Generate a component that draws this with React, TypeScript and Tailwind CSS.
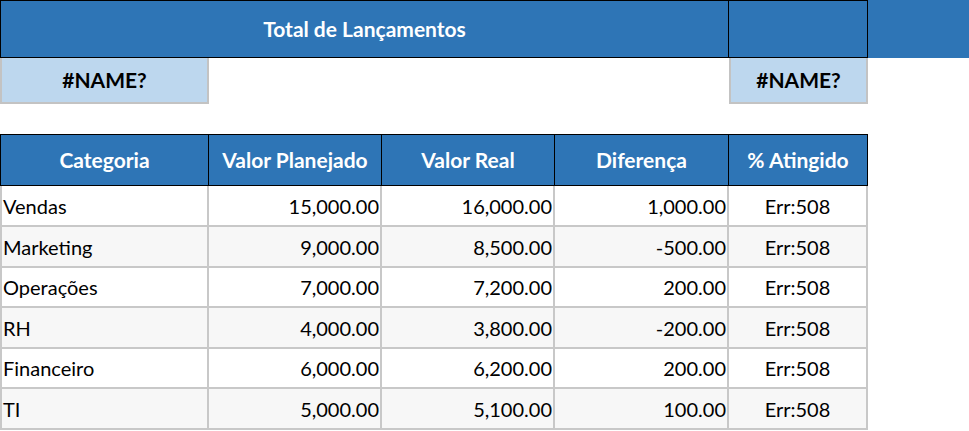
import React from 'react';

const BLUE = 'bg-[#2e75b6]';

interface Row {
  cat: string;
  plan: string;
  real: string;
  diff: string;
  h: string;
}

const rows: Row[] = [
  { cat: 'Vendas', plan: '15,000.00', real: '16,000.00', diff: '1,000.00', h: 'h-[41px]' },
  { cat: 'Marketing', plan: '9,000.00', real: '8,500.00', diff: '-500.00', h: 'h-[41px]' },
  { cat: 'Operações', plan: '7,000.00', real: '7,200.00', diff: '200.00', h: 'h-[40px]' },
  { cat: 'RH', plan: '4,000.00', real: '3,800.00', diff: '-200.00', h: 'h-[41px]' },
  { cat: 'Financeiro', plan: '6,000.00', real: '6,200.00', diff: '200.00', h: 'h-[40px]' },
  { cat: 'TI', plan: '5,000.00', real: '5,100.00', diff: '100.00', h: 'h-[41px]' },
];

const headers = [
  { label: 'Categoria', w: 'w-[209px] border-l' },
  { label: 'Valor Planejado', w: 'w-[173px]' },
  { label: 'Valor Real', w: 'w-[173px]' },
  { label: 'Diferença', w: 'w-[174px]' },
  { label: '% Atingido', w: 'w-[139px]' },
];

export default function App() {
  return (
    <div className="w-[969px] h-[431px] overflow-hidden bg-white text-black font-['Lato','Liberation_Sans',sans-serif]">
      {/* title band */}
      <div className="flex h-[58px]">
        <div className={`w-[729px] ${BLUE} border border-black flex items-center justify-center text-white font-bold text-[21px]`}>
          Total de Lançamentos
        </div>
        <div className={`w-[139px] ${BLUE} border-y border-r border-black`} />
        <div className={`flex-1 ${BLUE}`} />
      </div>

      {/* totals */}
      <div className="flex h-[46px]">
        <div className="w-[209px] bg-[#bdd7ee] border-x-2 border-b-2 border-[#c3c3c3] flex items-center justify-center font-bold text-[21px]">
          #NAME?
        </div>
        <div className="w-[520px]" />
        <div className="w-[139px] bg-[#bdd7ee] border-x-2 border-b-2 border-[#c3c3c3] flex items-center justify-center font-bold text-[21px]">
          #NAME?
        </div>
      </div>

      <div className="h-[30px]" />

      {/* table header */}
      <div className="flex h-[52px] w-[868px]">
        {headers.map(h => (
          <div
            key={h.label}
            className={`${h.w} ${BLUE} border-y border-r border-black flex items-center justify-center text-white font-bold text-[21px]`}
          >
            {h.label}
          </div>
        ))}
      </div>

      {rows.map((r, i) => (
        <div key={r.cat} className={`flex w-[868px] ${r.h} text-[20px] ${i % 2 ? 'bg-[#f7f7f7]' : 'bg-white'}`}>
          <div className="w-[209px] border-x-2 border-b-2 border-[#c8c8c8] flex items-center pl-px">{r.cat}</div>
          <div className="w-[173px] border-r-2 border-b-2 border-[#c8c8c8] flex items-center justify-end px-[1px]">{r.plan}</div>
          <div className="w-[173px] border-r-2 border-b-2 border-[#c8c8c8] flex items-center justify-end px-[1px]">{r.real}</div>
          <div className="w-[174px] border-r-2 border-b-2 border-[#c8c8c8] flex items-center justify-end px-[1px]">{r.diff}</div>
          <div className="w-[139px] border-r-2 border-b-2 border-[#c8c8c8] flex items-center justify-center">Err:508</div>
        </div>
      ))}
    </div>
  );
}
